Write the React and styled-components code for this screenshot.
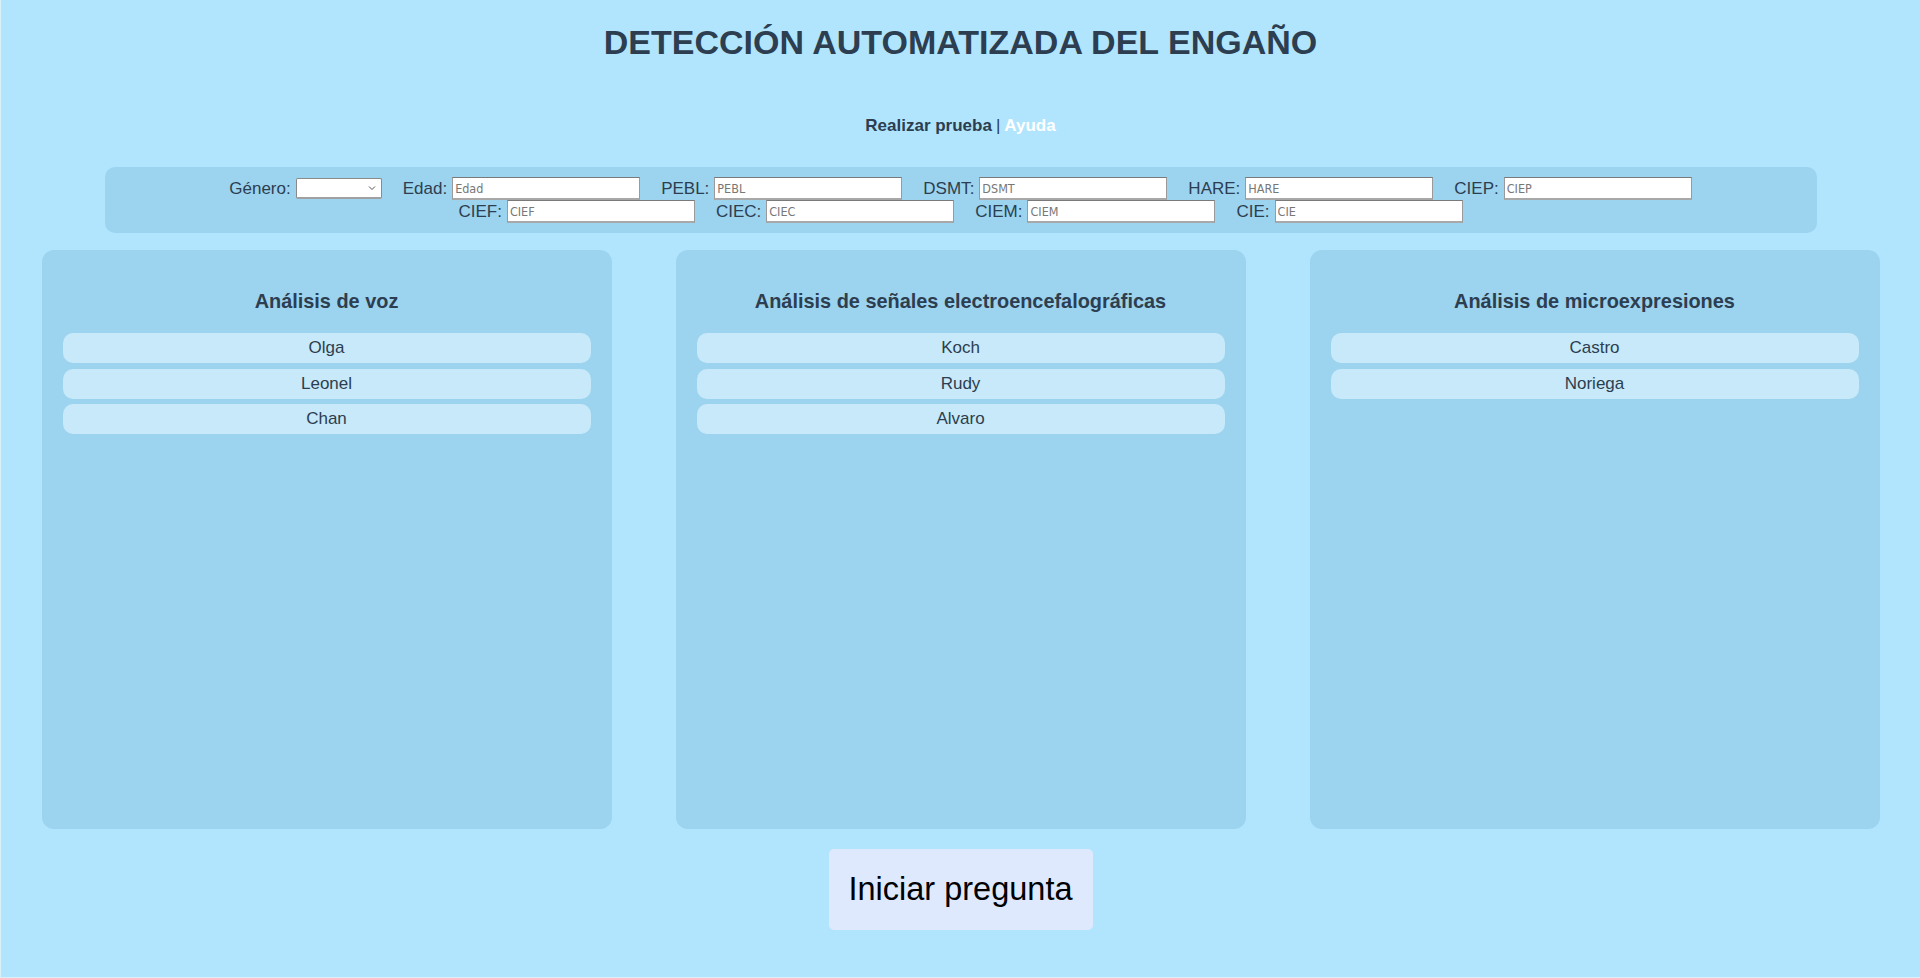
import React from 'react'
import styled, { createGlobalStyle } from 'styled-components'

const GlobalStyle = createGlobalStyle`
  html, body {
    margin: 0;
    padding: 0;
    background: #b1e5fe;
  }
  body {
    font-family: "Liberation Sans", Arial, sans-serif;
    font-size: 17px;
    color: #2c3e50;
  }
`

const Page = styled.div`
  min-height: 978px;
  box-sizing: border-box;
  padding-top: 23px;
  text-align: center;
  border-left: 1px solid #d9f0fb;
  border-bottom: 1px solid #d9f0fb;
`

const Title = styled.h1`
  margin: 0;
  font-size: 34px;
  line-height: 38px;
  font-weight: bold;
  color: #2c3e50;
`

const Nav = styled.nav`
  margin-top: 55px;
  font-size: 17px;
  line-height: 19px;
  font-weight: bold;
  color: #2c3e50;
`

const NavLink = styled.a`
  font-weight: bold;
  color: ${p => (p.active ? '#ffffff' : '#2c3e50')};
  text-decoration: none;
  cursor: pointer;
`

const Sep = styled.span`
  font-weight: normal;
  margin: 0 4px;
`

const FormBox = styled.div`
  margin: 32px auto 0;
  width: 1712px;
  box-sizing: border-box;
  padding: 10px 100px;
  background: #9cd3ee;
  border-radius: 10px;
  display: flex;
  flex-wrap: wrap;
  justify-content: center;
  column-gap: 21px;
  row-gap: 0;
`

const Field = styled.label`
  display: flex;
  align-items: center;
  gap: 5px;
  height: 23px;
  font-size: 17px;
  color: #2c3e50;
`

const TextInput = styled.input`
  width: 188px;
  height: 23px;
  box-sizing: border-box;
  padding: 1px 2px;
  border: 1px solid #9a9a9a;
  border-top-color: #7a7a7a;
  border-bottom: 2px solid #a8a8a8;
  background: #fff;
  font-family: "DejaVu Sans Condensed", "Liberation Sans Narrow", "Liberation Sans", sans-serif;
  font-size: 12.5px;
  color: #333;
  &::placeholder {
    color: #777;
  }
`

const SelectWrap = styled.span`
  position: relative;
  display: inline-flex;
`

const Select = styled.select`
  appearance: none;
  -webkit-appearance: none;
  width: 86px;
  height: 21px;
  box-sizing: border-box;
  border: 1px solid #8a8a8a;
  border-bottom: 2px solid #a0a0a0;
  border-radius: 2px;
  background: #fff;
  font-size: 13px;
`

const Chevron = styled.svg`
  position: absolute;
  right: 6px;
  top: 7px;
  width: 8px;
  height: 6px;
  pointer-events: none;
`

const Panels = styled.div`
  margin-top: 17px;
  display: grid;
  grid-template-columns: repeat(3, 570px);
  column-gap: 64px;
  justify-content: center;
`

const Panel = styled.section`
  height: 579px;
  box-sizing: border-box;
  padding: 22px 21px;
  background: #9cd3ee;
  border-radius: 12px;
  display: flex;
  flex-direction: column;
  gap: 5.5px;
`

const PanelTitle = styled.h3`
  margin: 18px 0 14.5px;
  font-size: 19.9px;
  line-height: 23px;
  font-weight: bold;
  color: #2c3e50;
`

const Item = styled.div`
  height: 30px;
  line-height: 30px;
  border-radius: 10px;
  background: #c7e9f9;
  font-size: 17px;
  color: #2c3e50;
  cursor: pointer;
`

const StartButton = styled.button`
  display: block;
  margin: 20px auto 0;
  width: 264px;
  height: 81px;
  border: none;
  border-radius: 5px;
  background: #dee9fd;
  font-family: "Liberation Sans", Arial, sans-serif;
  font-size: 32.5px;
  color: #000;
  cursor: pointer;
`

const fieldsTop = ['Edad', 'PEBL', 'DSMT', 'HARE', 'CIEP']
const fieldsBottom = ['CIEF', 'CIEC', 'CIEM', 'CIE']

const panels = [
  { title: 'Análisis de voz', items: ['Olga', 'Leonel', 'Chan'] },
  { title: 'Análisis de señales electroencefalográficas', items: ['Koch', 'Rudy', 'Alvaro'] },
  { title: 'Análisis de microexpresiones', items: ['Castro', 'Noriega'] },
]

export default function App() {
  return (
    <Page>
      <GlobalStyle />
      <Title>DETECCIÓN AUTOMATIZADA DEL ENGAÑO</Title>
      <Nav>
        <NavLink>Realizar prueba</NavLink>
        <Sep>|</Sep>
        <NavLink active>Ayuda</NavLink>
      </Nav>

      <FormBox>
        <Field>
          Género:
          <SelectWrap>
            <Select defaultValue="">
              <option value=""></option>
              <option>Masculino</option>
              <option>Femenino</option>
            </Select>
            <Chevron viewBox="0 0 8 6">
              <path d="M1 1.5 L4 4.5 L7 1.5" fill="none" stroke="#555" strokeWidth="1" />
            </Chevron>
          </SelectWrap>
        </Field>
        {fieldsTop.concat(fieldsBottom).map(f => (
          <Field key={f}>
            {f}:
            <TextInput placeholder={f} />
          </Field>
        ))}
      </FormBox>

      <Panels>
        {panels.map(p => (
          <Panel key={p.title}>
            <PanelTitle>{p.title}</PanelTitle>
            {p.items.map(name => (
              <Item key={name}>{name}</Item>
            ))}
          </Panel>
        ))}
      </Panels>

      <StartButton>Iniciar pregunta</StartButton>
    </Page>
  )
}
